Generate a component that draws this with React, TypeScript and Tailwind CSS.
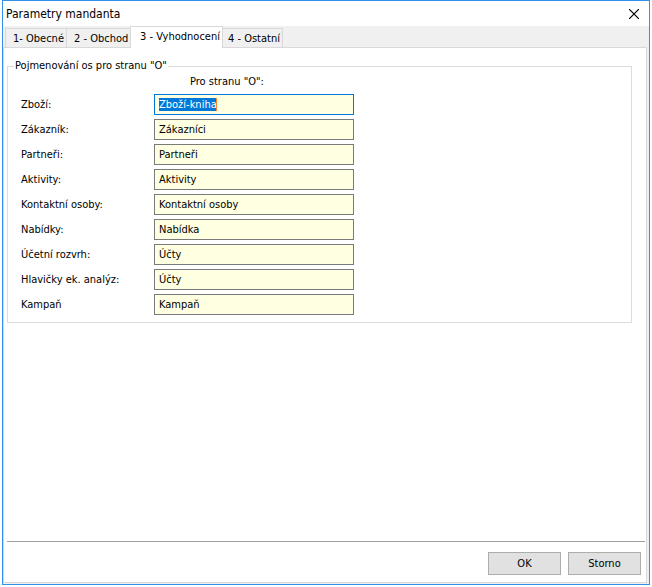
import { useEffect, useRef, useState } from "react";

const tabs = [
  { title: "1- Obecné", shape: "w-[61px] pl-[7px]" },
  { title: "2 - Obchod", shape: "w-[64px] pl-[7px]" },
  { title: "3 - Vyhodnocení", shape: "w-[93px] pl-[9px]" },
  { title: "4 - Ostatní", shape: "w-[60px] border-r border-l-0 pl-[5px]" },
];

const axes = [
  { id: "zbozi", label: "Zboží:", value: "Zboží-kniha" },
  { id: "zakaznik", label: "Zákazník:", value: "Zákazníci" },
  { id: "partneri", label: "Partneři:", value: "Partneři" },
  { id: "aktivity", label: "Aktivity:", value: "Aktivity" },
  { id: "osoby", label: "Kontaktní osoby:", value: "Kontaktní osoby" },
  { id: "nabidky", label: "Nabídky:", value: "Nabídka" },
  { id: "rozvrh", label: "Účetní rozvrh:", value: "Účty" },
  { id: "hlavicky", label: "Hlavičky ek. analýz:", value: "Účty" },
  { id: "kampan", label: "Kampaň", value: "Kampaň" },
];

function TitleBar() {
  return (
    <header className="flex h-[25px] shrink-0 items-center justify-between bg-white pr-2.5 pl-[3px]">
      <h1 className="text-xs">Parametry mandanta</h1>
      <button type="button" aria-label="Zavřít" className="flex">
        <svg width="10" height="10" viewBox="0 0 10 10" stroke="#000" strokeWidth="1.2">
          <path d="M0 0L10 10M10 0L0 10" />
        </svg>
      </button>
    </header>
  );
}

function TabBar({ active, onSelect }: { active: number; onSelect: (index: number) => void }) {
  return (
    <div role="tablist" className="flex h-[21px] shrink-0 items-end pl-0.5">
      {tabs.map((tab, index) => (
        <button
          key={tab.title}
          type="button"
          role="tab"
          aria-selected={index === active}
          onClick={() => onSelect(index)}
          className={`shrink-0 border-t border-l border-[#d9d9d9] text-left whitespace-nowrap ${tab.shape} ${
            index === active ? "z-10 -mb-px h-[22px] border-r bg-white" : "h-[19px] bg-[#f0f0f0] pt-0.5"
          }`}
        >
          {tab.title}
        </button>
      ))}
    </div>
  );
}

function AxisNames() {
  const first = useRef<HTMLInputElement>(null);
  const [caret, setCaret] = useState(true);
  useEffect(() => {
    first.current?.focus();
    first.current?.select();
  }, []);

  return (
    <fieldset className="mt-2.5 mr-[14px] ml-[3px] border border-[#dcdcdc] pb-[7px]">
      <legend className="ml-1.5 px-px leading-4">Pojmenování os pro stranu "O"</legend>
      <div className="pl-[182px] leading-4">Pro stranu "O":</div>
      <div className="mt-1 flex flex-col gap-1">
        {axes.map((axis, index) => (
          <div key={axis.id} className="flex items-center pl-[13px]">
            <label htmlFor={axis.id} className="w-[133px] shrink-0 pt-0.5">
              {axis.label}
            </label>
            <div className="relative flex">
              <input
                id={axis.id}
                ref={index === 0 ? first : undefined}
                type="text"
                defaultValue={axis.value}
                onBlur={() => setCaret(false)}
                onKeyDown={() => setCaret(false)}
                className="h-[21px] w-[200px] border border-[#7a7a7a] bg-[#ffffe1] px-1 leading-[13px] outline-none selection:bg-[#0078d7] selection:text-white focus:border-[#0078d7]"
              />
              {index === 0 && caret && (
                <span className="absolute top-1 left-[62px] h-[13px] w-px bg-[#ff8728]" />
              )}
            </div>
          </div>
        ))}
      </div>
    </fieldset>
  );
}

export default function App() {
  const [active, setActive] = useState(2);
  return (
    <div className="flex h-screen bg-white px-0.5 pb-0.5 font-['DejaVu_Sans_Condensed','DejaVu_Sans',sans-serif] text-[11px] text-black">
      <main className="flex min-w-0 flex-1 flex-col border border-[#3391ea] bg-[#f0f0f0]">
        <TitleBar />
        <TabBar active={active} onSelect={setActive} />
        <section className="mr-0.5 mb-px flex flex-1 flex-col border border-[#d9d9d9] bg-white">
          <AxisNames />
          <div className="mt-auto mr-px ml-[3px] border-t border-[#a0a0a0]" />
          <footer className="flex justify-end gap-[7px] pt-2.5 pr-[5px] pb-[7px]">
            <button type="button" className="h-[23px] w-[73px] border border-[#adadad] bg-[#e1e1e1] pt-px">
              OK
            </button>
            <button type="button" className="h-[23px] w-[73px] border border-[#adadad] bg-[#e1e1e1] pt-px">
              Storno
            </button>
          </footer>
        </section>
      </main>
    </div>
  );
}
